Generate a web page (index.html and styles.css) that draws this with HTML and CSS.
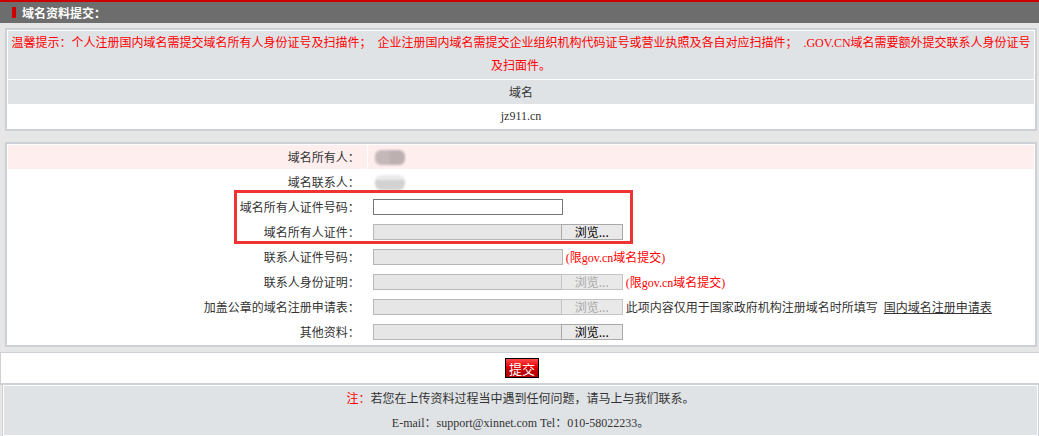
FILE: index.html
```html
<!DOCTYPE html>
<html lang="zh-CN">
<head>
    <meta charset="UTF-8">
    <title>域名资料提交</title>
    <link rel="stylesheet" href="styles.css">
</head>
<body>
    <div class="title-bar">
        <span class="title-mark"></span>
        <span class="title-text">域名资料提交：</span>
    </div>

    <div class="box box-info">
        <table class="grid">
            <tr>
                <td class="notice">温馨提示：个人注册国内域名需提交域名所有人身份证号及扫描件；&nbsp; 企业注册国内域名需提交企业组织机构代码证号或营业执照及各自对应扫描件；&nbsp; .GOV.CN域名需要额外提交联系人身份证号<br>及扫面件。</td>
            </tr>
            <tr>
                <td class="head-cell">域名</td>
            </tr>
            <tr>
                <td class="domain-cell">jz911.cn</td>
            </tr>
        </table>
    </div>

    <div class="box box-form">
        <table class="grid form-grid">
            <tr class="row-pink">
                <td class="label">域名所有人：</td>
                <td class="value"><span class="blur blur-owner"></span></td>
            </tr>
            <tr>
                <td class="label">域名联系人：</td>
                <td class="value"><span class="blur blur-contact"></span></td>
            </tr>
            <tr>
                <td class="label">域名所有人证件号码：</td>
                <td class="value"><input type="text" class="text-input"></td>
            </tr>
            <tr>
                <td class="label">域名所有人证件：</td>
                <td class="value">
                    <span class="file-input"><span class="file-path"></span><button type="button" class="file-btn">浏览...</button></span>
                </td>
            </tr>
            <tr>
                <td class="label">联系人证件号码：</td>
                <td class="value"><input type="text" class="text-input" disabled> <span class="hint">(限gov.cn域名提交)</span></td>
            </tr>
            <tr>
                <td class="label">联系人身份证明：</td>
                <td class="value">
                    <span class="file-input is-disabled"><span class="file-path"></span><button type="button" class="file-btn" disabled>浏览...</button></span>
                    <span class="hint">(限gov.cn域名提交)</span>
                </td>
            </tr>
            <tr>
                <td class="label">加盖公章的域名注册申请表：</td>
                <td class="value">
                    <span class="file-input is-disabled"><span class="file-path"></span><button type="button" class="file-btn" disabled>浏览...</button></span>
                    <span class="note">此项内容仅用于国家政府机构注册域名时所填写&nbsp; <a href="#" class="form-link">国内域名注册申请表</a></span>
                </td>
            </tr>
            <tr>
                <td class="label">其他资料：</td>
                <td class="value">
                    <span class="file-input"><span class="file-path"></span><button type="button" class="file-btn">浏览...</button></span>
                </td>
            </tr>
        </table>
        <div class="highlight"></div>
    </div>

    <div class="submit-bar">
        <button type="button" class="submit-btn">提交</button>
    </div>

    <div class="footer">
        <div class="footer-body">
            <div><span class="red">注：</span>若您在上传资料过程当中遇到任何问题，请马上与我们联系。</div>
            <div>E-mail：support@xinnet.com Tel：010-58022233。</div>
        </div>
    </div>
</body>
</html>
```

FILE: styles.css
```css
html {
    overflow: hidden;
}

body {
    margin: 0;
    padding: 0;
    background: #e6e6e6;
    font-family: "Liberation Serif", "Noto Sans CJK SC", serif;
    font-size: 12px;
    color: #333;
}

.title-bar {
    display: flex;
    align-items: center;
    gap: 6px;
    height: 21px;
    padding-left: 12px;
    border-top: 2px solid #cc0000;
    background: #6d6d6d;
}

.title-mark {
    width: 4px;
    height: 11px;
    background: #cc0000;
}

.title-text {
    color: #fff;
    font-weight: bold;
    font-family: "Noto Sans CJK SC", sans-serif;
}

.box {
    margin: 5px 2px 0 5px;
    border: 2px solid #cdd1d6;
    background: #fff;
}

.box-form {
    position: relative;
    margin-top: 11px;
}

.grid {
    width: 100%;
    border-spacing: 1px;
}

.grid td {
    padding: 0;
}

.notice {
    height: 46px;
    padding: 1px 0 !important;
    line-height: 23px;
    text-align: center;
    color: #ff0000;
    background: #e0e3e6;
}

.head-cell {
    height: 24px;
    text-align: center;
    background: #e0e3e6;
}

.domain-cell {
    height: 23px;
    text-align: center;
}

.form-grid td {
    height: 24px;
}

.form-grid .label {
    width: 35%;
    padding-right: 7px;
    text-align: right;
    white-space: nowrap;
}

.form-grid .value {
    padding-left: 5px;
    white-space: nowrap;
}

.row-pink td {
    background: #ffeeee;
}

.blur {
    display: inline-block;
    width: 30px;
    height: 15px;
    margin-left: 2px;
    vertical-align: middle;
    border-radius: 6px;
    filter: blur(1px);
}

.blur-owner {
    background: linear-gradient(to right, #c4b8b8 50%, #bcb0b0 50%);
}

.blur-contact {
    background: linear-gradient(to bottom, #ebebeb 35%, #d2d2d2 35%);
}

.text-input {
    box-sizing: border-box;
    width: 190px;
    height: 16px;
    margin: 0;
    padding: 0 2px;
    border: 1px solid #777;
    vertical-align: middle;
    font-size: 12px;
}

.text-input:disabled {
    border-color: #b4b4b4;
    background: #e6e6e6;
}

.file-input {
    display: inline-flex;
    vertical-align: middle;
    height: 16px;
}

.file-path {
    box-sizing: border-box;
    width: 188px;
    height: 16px;
    border: 1px solid #b8b8b8;
    border-right: none;
    background: #e6e6e6;
}

.file-btn {
    box-sizing: border-box;
    width: 62px;
    height: 16px;
    margin: 0;
    padding: 0;
    border: 1px solid #a9a9a9;
    background: #e9e9e9;
    font-family: "Noto Sans CJK SC", sans-serif;
    font-size: 12px;
    line-height: 14px;
    color: #000;
}

.file-btn:disabled {
    color: #a8a8a8;
    border-color: #c4c4c4;
}

.hint {
    vertical-align: middle;
    color: #ff0000;
}

.note {
    vertical-align: middle;
}

.form-link {
    color: #333;
    text-decoration: underline;
}

.highlight {
    position: absolute;
    top: 46px;
    left: 227px;
    box-sizing: border-box;
    width: 399px;
    height: 54px;
    border: 3px solid #ef3333;
}

.submit-bar {
    margin-top: 5px;
    padding: 5px 0;
    border-top: 1px solid #cdd1d6;
    border-left: 1px solid #cdd1d6;
    border-bottom: 2px solid #cdd1d6;
    background: #fff;
    text-align: center;
}

.submit-btn {
    box-sizing: border-box;
    width: 34px;
    height: 20px;
    margin: 0 0 0 4px;
    padding: 0;
    border: 1px solid #000;
    background: linear-gradient(to bottom, #ff4a4a 0%, #e60000 45%, #c80000 55%, #b40000 100%);
    color: #fff;
    font-family: "Noto Sans CJK SC", sans-serif;
    font-size: 13px;
    line-height: 17px;
    vertical-align: top;
}

.footer {
    margin-left: 2px;
    padding: 1px;
    border: 1px solid #cdd1d6;
    border-top: none;
    background: #fff;
}

.footer-body {
    padding-top: 1px;
    line-height: 24px;
    text-align: center;
    background: #e0e3e6;
}

.red {
    color: #ff0000;
}
```
